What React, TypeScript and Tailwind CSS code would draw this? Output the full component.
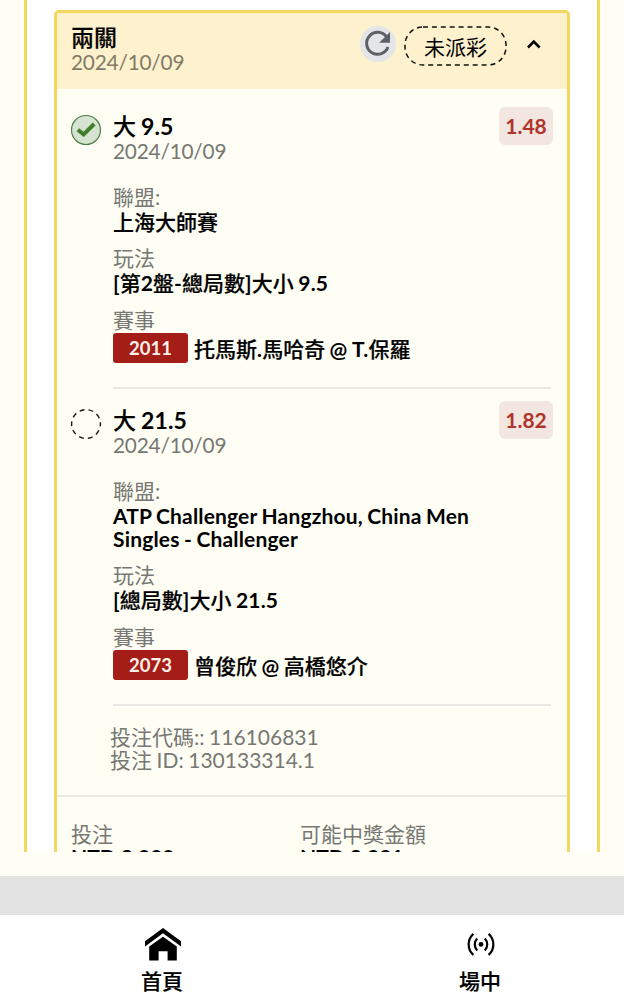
import type { ReactNode } from "react";

type Bet = {
  title: string;
  date: string;
  odds: string;
  won: boolean;
  league: string;
  market: string;
  code: string;
  match: string;
};

const bets: Bet[] = [
  {
    title: "大 9.5",
    date: "2024/10/09",
    odds: "1.48",
    won: true,
    league: "上海大師賽",
    market: "[第2盤-總局數]大小 9.5",
    code: "2011",
    match: "托馬斯.馬哈奇 @ T.保羅",
  },
  {
    title: "大 21.5",
    date: "2024/10/09",
    odds: "1.82",
    won: false,
    league: "ATP Challenger Hangzhou, China Men Singles - Challenger",
    market: "[總局數]大小 21.5",
    code: "2073",
    match: "曾俊欣 @ 高橋悠介",
  },
];

/* Emphasised text: Han runs take a medium weight so they balance with bold Latin. */
function Strong({ children }: { children: string }) {
  const runs = children.split(/([\u4e00-\u9fff]+)/).filter(Boolean);
  return (
    <span className="font-bold">
      {runs.map((run, i) =>
        /[\u4e00-\u9fff]/.test(run) ? (
          <span key={i} className="font-medium tracking-normal [-webkit-text-stroke:0.2px_black]">
            {run}
          </span>
        ) : (
          <span key={i} className="tracking-[0.16px] [word-spacing:-0.8px]">{run}</span>
        ),
      )}
    </span>
  );
}

function StatusIcon({ won }: { won: boolean }) {
  return (
    <svg className="block h-8 w-8" viewBox="0 0 32 32" fill="none">
      {won ? (
        <>
          <circle cx="16" cy="16" r="14.5" fill="#d6e3d0" stroke="#4d7f43" strokeWidth="1.2" />
          <path d="M7.8 15.8l5.8 4.6L24.2 10" stroke="#417d2b" strokeWidth="4" />
        </>
      ) : (
        <circle cx="16" cy="16" r="14.4" stroke="#151515" strokeWidth="1.4" strokeDasharray="4.9 4.15" strokeDashoffset="2.4" />
      )}
    </svg>
  );
}

function Field({ label, children }: { label: string; children: ReactNode }) {
  return (
    <div className="mb-3">
      <div className="leading-[25px] text-[#777773]">{label}</div>
      <div className="pt-px leading-[23px]">{children}</div>
    </div>
  );
}

function BetItem({ bet }: { bet: Bet }) {
  return (
    <section className="flex pl-[13px] pr-[14px]">
      <div className="w-[43px] shrink-0 pt-[19px]">
        <StatusIcon won={bet.won} />
      </div>
      <div className="min-w-0 flex-1">
        <div className="flex justify-between">
          <div className="pt-[19px]">
            <div className="text-[23px] leading-[25px]">
              <Strong>{bet.title}</Strong>
            </div>
            <div className="pb-0.5 text-[20.8px] leading-[23px] tracking-[-0.2px] text-[#777773]">{bet.date}</div>
          </div>
          <div className="mt-[12px] flex h-[38px] w-[54px] items-center justify-center rounded-md bg-[#f3e5df] pb-px text-[21px] font-bold text-[#b0342b]">
            {bet.odds}
          </div>
        </div>
        <div className="pt-5">
          <Field label="聯盟:">
            <p className="w-[390px]">
              <Strong>{bet.league}</Strong>
            </p>
          </Field>
          <Field label="玩法">
            <Strong>{bet.market}</Strong>
          </Field>
          <div className="leading-[27px] text-[#777773]">賽事</div>
          <div className="flex h-[30px] items-center">
            <span className="flex h-[30px] w-[75px] items-center justify-center rounded-[3px] bg-[#a51d17] pt-0.5 text-[18.5px] font-bold text-[#fdf1ea]">
              {bet.code}
            </span>
            <span className="pl-1.5 pt-0.5">
              <Strong>{bet.match}</Strong>
            </span>
          </div>
        </div>
        <div className="mr-[2px] mt-6 h-0.5 bg-[#e9e9e3]" />
      </div>
    </section>
  );
}

export default function App() {
  return (
    <div className="flex h-[1000px] w-[624px] flex-col overflow-hidden bg-white font-['Lato','Noto_Sans_CJK_TC',sans-serif] text-[21px] text-black">
      <main className="h-[876px] bg-[#fefef5]">
        <div className="mx-6 h-[852px] overflow-hidden border-x-[3px] border-[#f3d75f] bg-white px-[27px] pt-[10px]">
          <article className="h-[900px] rounded-t-[5px] border-[3px] border-[#f3d75f] bg-[#fefef5]">
            <header className="flex h-[76px] items-start bg-[#fdf1ce] pl-[14px]">
              <div className="pt-3">
                <h1 className="text-[23px] leading-[25px]">
                  <Strong>兩關</Strong>
                </h1>
                <div className="text-[20.8px] leading-6 tracking-[-0.2px] text-[#827b67]">2024/10/09</div>
              </div>
              <div className="ml-auto flex items-center pr-[25px] pt-[13px]">
                <span className="mb-1 flex h-9 w-9 items-center justify-center rounded-full bg-[#e3e5e8]">
                  <svg className="h-9 w-9" viewBox="0 0 36 36" fill="none">
                    <path d="M26.5 10.8A11 11 0 1 0 28 21" stroke="#5d6165" strokeWidth="3" />
                    <path d="M30 6v10.8H19.2z" fill="#5d6165" />
                  </svg>
                </span>
                <span className="relative ml-2 flex h-10 w-[103px] items-center justify-center pt-0.5">
                  <svg className="absolute inset-0 h-10 w-[103px]" viewBox="0 0 103 40" fill="none">
                    <rect x="1" y="1" width="101" height="38" rx="18" stroke="#111" strokeWidth="1.5" strokeDasharray="5 3.9" />
                  </svg>
                  未派彩
                </span>
                <svg className="mb-1 ml-[19px] h-4 w-4" viewBox="0 0 16 16" fill="none">
                  <path d="M2 11.5l5.8-6 5.8 6" stroke="#000" strokeWidth="2.6" />
                </svg>
              </div>
            </header>
            <div className="pt-1.5">
              {bets.map((bet) => (
                <BetItem key={bet.code} bet={bet} />
              ))}
            </div>
            <div className="pl-[53px] pt-[19px] leading-[23px] text-[#777773]">
              <div className="[word-spacing:-0.8px]">投注代碼:: 116106831</div>
              <div className="[word-spacing:-0.8px]">投注 ID: 130133314.1</div>
            </div>
            <div className="mt-6 h-0.5 bg-[#e9e9e3]" />
            <div className="grid grid-cols-[229px_1fr] pl-[14px] pt-[25px]">
              <div>
                <div className="leading-[24px] text-[#777773]">投注</div>
                <div className="font-bold leading-[22px]">NTD 2,000</div>
              </div>
              <div>
                <div className="leading-[24px] text-[#777773]">可能中獎金額</div>
                <div className="font-bold leading-[22px]">NTD 2,991</div>
              </div>
            </div>
          </article>
        </div>
      </main>
      <div className="h-[38.5px] bg-[#e3e3e3]" />
      <nav className="flex flex-1 bg-white pt-3">
        <a className="ml-[122px] flex w-20 flex-col items-center">
          <svg className="h-9 w-10" viewBox="0 0 40 36">
            <path d="M3 14.2L21 1l18 13.2v5.2L21 6.2 3 19.4z" />
            <path d="M7.2 19.5L21 9.7l13.8 9.8v13.9h-9.2v-9.2h-9v9.2H7.2z" />
          </svg>
          <span className="mt-[5px] leading-[26px]">
            <Strong>首頁</Strong>
          </span>
        </a>
        <a className="ml-[238px] flex w-20 flex-col items-center">
          <svg className="h-9 w-10" viewBox="0 0 40 36" fill="none" stroke="#000" strokeWidth="2.2">
            <path d="M13.4 6.9a14 14 0 0 0 0 21M17.2 11.4a8.6 8.6 0 0 0 0 12M28.6 6.9a14 14 0 0 1 0 21M24.8 11.4a8.6 8.6 0 0 1 0 12" />
            <circle cx="21" cy="17.4" r="2.4" fill="#000" stroke="none" />
          </svg>
          <span className="mt-[5px] leading-[26px]">
            <Strong>場中</Strong>
          </span>
        </a>
      </nav>
    </div>
  );
}
